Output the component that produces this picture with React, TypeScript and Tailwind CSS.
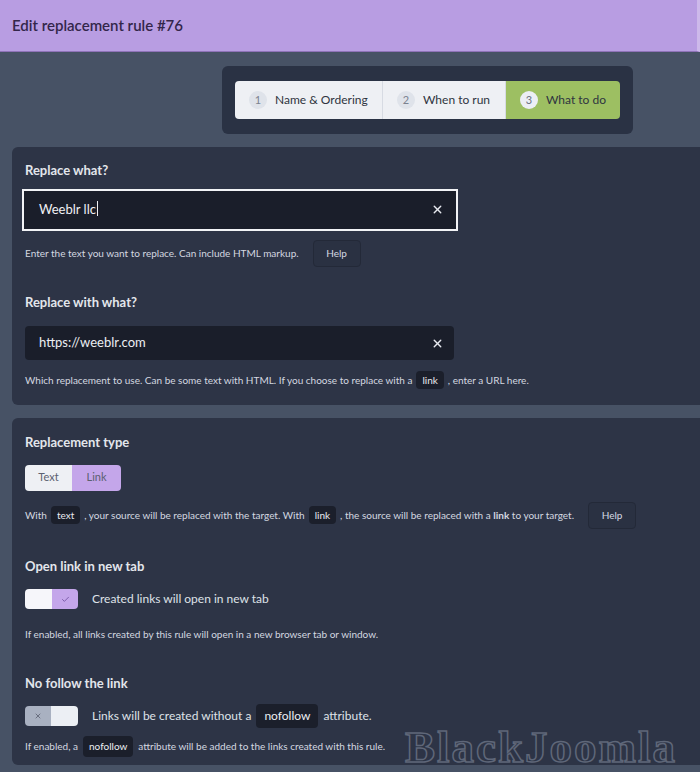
import { X, Check } from "lucide-react";

const Chip = ({ children }: { children: React.ReactNode }) => (
  <span className="mx-1 inline-flex items-center rounded-sm bg-[#1b1f2b] px-[6px] py-[4px] leading-none text-[#e8eaf0]">
    {children}
  </span>
);

const HelpButton = ({ gap = "ml-[12px]" }: { gap?: string }) => (
  <button
    className={`${gap} h-[27px] w-[48px] rounded-sm border border-[#232938] bg-[#2a3142] text-[10px] text-[#d5d9e2]`}
  >
    Help
  </button>
);

const Step = ({
  n,
  label,
  active,
  width,
}: {
  n: number;
  label: string;
  active?: boolean;
  width: string;
}) => (
  <div
    className={`flex h-full items-center gap-[8px] pl-[14px] ${width} ${
      active ? "bg-[#9dbf62]" : "bg-[#eef0f4] border-r border-[#d7dbe3]"
    }`}
  >
    <span
      className={`flex h-[18px] w-[18px] items-center justify-center rounded-full text-[11px] ${
        active ? "bg-[#eceef4] text-[#6b7280]" : "bg-[#dfe3ea] text-[#7b8290]"
      }`}
    >
      {n}
    </span>
    <span className="text-[12px] text-[#2f3440]">{label}</span>
  </div>
);

const App = () => {
  return (
    <div
      className="relative h-[772px] w-[700px] overflow-hidden bg-[#475265]"
      style={{ fontFamily: "Lato, 'Noto Sans', sans-serif" }}
    >
      <div className="flex h-[52px] items-center border-b border-r-[3px] border-b-[#8f73b8] border-r-[#cdb9ea] bg-[#b89de2] pl-[12px]">
        <h1 className="text-[15px] font-semibold text-[#33264a]">
          Edit replacement rule #76
        </h1>
      </div>

      <div className="pt-[14px]">
        <div className="ml-[222px] w-[411px] rounded-md bg-[#2a3244] px-[13px] py-[15px]">
          <div className="flex h-[38px] overflow-hidden rounded-sm">
            <Step n={1} label="Name & Ordering" width="w-[148px]" />
            <Step n={2} label="When to run" width="w-[123px]" />
            <Step n={3} label="What to do" width="w-[114px]" active />
          </div>
        </div>
      </div>

      <div className="ml-[12px] mt-[13px] flex h-[258px] flex-col rounded-l-md bg-[#2d3446] pl-[13px] pt-[14px]">
        <h2 className="text-[13px] font-bold text-[#e3e6ec]">Replace what?</h2>
        <div className="-ml-[3px] mt-[8px] flex h-[42px] w-[436px] items-center justify-between border-2 border-[#f2f3f6] bg-[#1a1e2a] pl-[15px] pr-[12px]">
          <span className="text-[13px] text-[#f0f1f4]">
            Weeblr llc<span className="ml-px inline-block h-[15px] w-px translate-y-[2px] bg-[#f0f1f4]" />
          </span>
          <X className="h-[13px] w-[13px] text-[#e8eaf0]" strokeWidth={2.5} />
        </div>
        <div className="mt-[9px] flex items-center text-[10px] text-[#d4d8e0]">
          <span>Enter the text you want to replace. Can include HTML markup.</span>
          <HelpButton gap="ml-[14px]" />
        </div>

        <h2 className="mt-[26px] text-[13px] font-bold text-[#e3e6ec]">
          Replace with what?
        </h2>
        <div className="mt-[14px] flex h-[34px] w-[429px] items-center justify-between rounded-sm bg-[#1a1e2a] pl-[14px] pr-[10px]">
          <span className="text-[13px] text-[#eceef2]">https://weeblr.com</span>
          <X className="h-[13px] w-[13px] text-[#e8eaf0]" strokeWidth={2.5} />
        </div>
        <div className="mt-[11px] flex items-center text-[10px] text-[#d4d8e0]">
          <span>
            Which replacement to use. Can be some text with HTML. If you choose to replace with a
          </span>
          <Chip>link</Chip>
          <span>, enter a URL here.</span>
        </div>
      </div>

      <div className="ml-[12px] mt-[13px] flex h-[347px] flex-col rounded-l-md bg-[#2d3446] pl-[13px] pt-[15px]">
        <h2 className="text-[13px] font-bold text-[#e3e6ec]">Replacement type</h2>
        <div className="mt-[12px] flex h-[26px] w-[96px] overflow-hidden rounded-sm text-[11px] text-[#5b6070]">
          <span className="flex w-[47px] items-center justify-center bg-[#eef0f4]">Text</span>
          <span className="flex w-[49px] items-center justify-center bg-[#c4a6ea]">Link</span>
        </div>
        <div className="mt-[11px] flex items-center text-[10px] text-[#d4d8e0]">
          <span>With</span>
          <Chip>text</Chip>
          <span>, your source will be replaced with the target. With</span>
          <Chip>link</Chip>
          <span>
            , the source will be replaced with a <b>link</b> to your target.
          </span>
          <HelpButton gap="ml-[14px]" />
        </div>

        <h2 className="mt-[28px] text-[13px] font-bold text-[#e3e6ec]">
          Open link in new tab
        </h2>
        <div className="mt-[13px] flex items-center">
          <div className="flex h-[20px] w-[53px] overflow-hidden rounded-sm">
            <span className="w-[27px] bg-[#f6f6fa]" />
            <span className="flex w-[26px] items-center justify-center bg-[#c4a6ea]">
              <Check className="h-[9px] w-[9px] text-[#7a5aa8]" strokeWidth={2.5} />
            </span>
          </div>
          <span className="ml-[14px] text-[12px] text-[#dfe2e8]">
            Created links will open in new tab
          </span>
        </div>
        <p className="mt-[18px] text-[10px] text-[#d4d8e0]">
          If enabled, all links created by this rule will open in a new browser tab or window.
        </p>

        <h2 className="mt-[32px] text-[13px] font-bold text-[#e3e6ec]">
          No follow the link
        </h2>
        <div className="mt-[10px] flex items-center">
          <div className="flex h-[20px] w-[53px] overflow-hidden rounded-sm">
            <span className="flex w-[26px] items-center justify-center bg-[#a9b1c1]">
              <X className="h-[8px] w-[8px] text-[#5b6272]" strokeWidth={2.5} />
            </span>
            <span className="w-[27px] bg-[#eceff4]" />
          </div>
          <span className="ml-[14px] flex items-center text-[12px] text-[#dfe2e8]">
            Links will be created without a
            <span className="mx-[5px] inline-flex h-[24px] items-center rounded-sm bg-[#1b1f2b] px-[8px] text-[#eceef2]">
              nofollow
            </span>
            attribute.
          </span>
        </div>
        <div className="mt-[8px] flex items-center text-[10px] text-[#d4d8e0]">
          <span>If enabled, a</span>
          <span className="mx-[5px] inline-flex h-[21px] items-center rounded-sm bg-[#1b1f2b] px-[6px] text-[#eceef2]">
            nofollow
          </span>
          <span>attribute will be added to the links created with this rule.</span>
        </div>
      </div>

      <div
        className="pointer-events-none absolute left-[405px] top-[725px] text-[45px] font-bold leading-none tracking-[2px] text-transparent"
        style={{
          fontFamily: "'Liberation Serif', serif",
          WebkitTextStroke: "1.5px #5f6779",
        }}
      >
        BlackJoomla
      </div>
    </div>
  );
};

export default App;
